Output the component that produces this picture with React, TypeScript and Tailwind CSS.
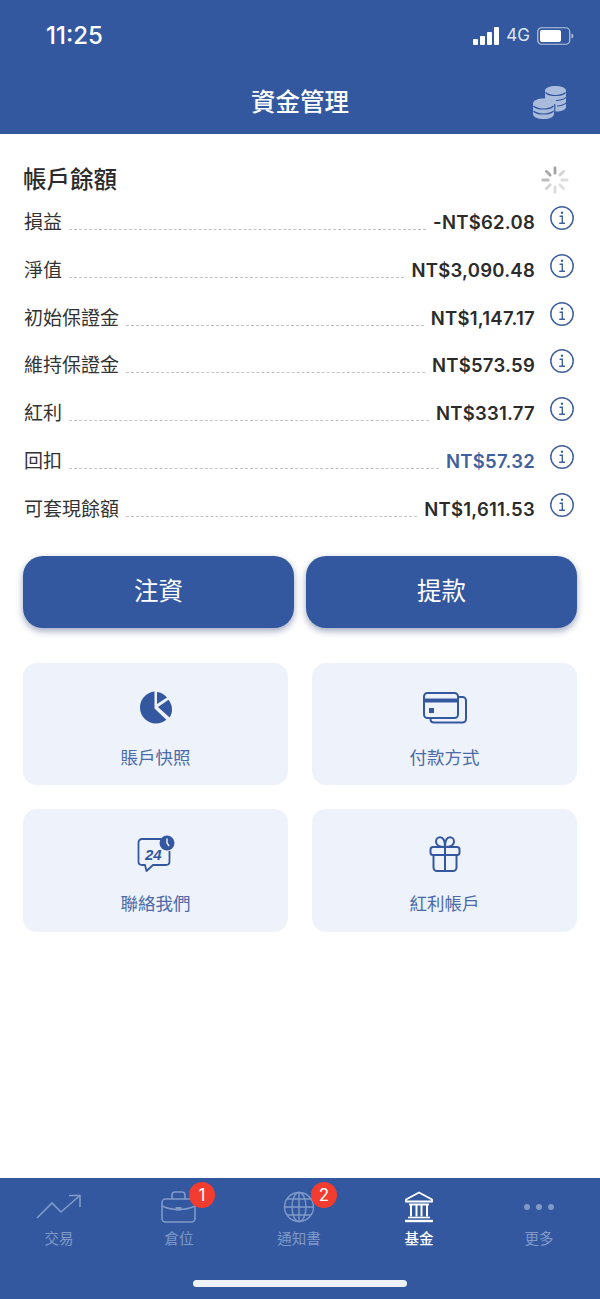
const rows = [
  { label: '損益', value: '-NT$62.08' },
  { label: '淨值', value: 'NT$3,090.48' },
  { label: '初始保證金', value: 'NT$1,147.17' },
  { label: '維持保證金', value: 'NT$573.59' },
  { label: '紅利', value: 'NT$331.77' },
  { label: '回扣', value: 'NT$57.32', blue: true },
  { label: '可套現餘額', value: 'NT$1,611.53' },
];

function InfoIcon() {
  return (
    <svg width="26" height="26" viewBox="0 0 26 26" fill="none" stroke="#3f619f" className="shrink-0">
      <circle cx="13" cy="13" r="11.2" strokeWidth="1.5" />
      <circle cx="13" cy="7.800" r="1.200" fill="#3f619f" stroke="none" />
      <path d="M10.600 11.200H13.300V18M10.200 18.300H16" strokeWidth="1.400" />
    </svg>
  );
}

function Spinner() {
  const bars = [0, 45, 90, 135, 180, 225, 270, 315];
  const shades = ['#a3a3a3', '#d4d4d4', '#dedede', '#e0e0e0', '#dcdcdc', '#d2d2d2', '#bcbcbc', '#a8a8a8'];
  return (
    <svg width="28" height="30" viewBox="0 0 28 30">
      {bars.map((deg, i) => (
        <rect key={deg} x="12.600" y="1.500" width="2.800" height="8" rx="1.200" fill={shades[i]} transform={`rotate(${deg} 14 15)`} />
      ))}
    </svg>
  );
}

function CoinsIcon() {
  return (
    <svg width="34" height="34" viewBox="0 0 34 34">
      {/* back stack */}
      <path d="M12 5.500C12 2.800 16.700 1 22.500 1S33 2.800 33 5.500V22c0 2.300-3.600 4-8 4.500H12Z" fill="#a9bcdc" />
      <path d="M12.500 7.500c2 2 5.800 3 10 3s8-1 10-3M23 15.500c4.200-.2 8-1.200 10-3.200M24 21c4-.3 7.300-1.300 9-3.200" stroke="#34589f" strokeWidth="1.200" fill="none" />
      {/* front stack */}
      <path d="M0 18.500C0 15.500 4.700 13.500 10.500 13.500S21 15.500 21 18.500v10.500C21 32 16.300 34 10.500 34S0 32 0 29Z" fill="#a9bcdc" />
      <path d="M21.800 19v10" stroke="#34589f" strokeWidth="1.200" />
      <path d="M0.500 21c2 2 5.800 3 10 3s8-1 10-3M.5 26c2 2 5.800 3 10 3s8-1 10-3" stroke="#34589f" strokeWidth="1.200" fill="none" />
    </svg>
  );
}

function PieIcon() {
  return (
    <svg width="34" height="36" viewBox="0 0 34 36" fill="#34589f">
      <path d="M15.500 1.500C7.300 2.300 1 9.200 1 17.500 1 26.300 8.200 33.500 17 33.500c4 0 7.600-1.400 10.400-3.800L15.500 18.500Z" />
      <path d="M18 2v12l10-6.500C25.500 4.500 22 2.400 18 2Z" />
      <path d="M19 17l10.500-7.200C31.700 12.700 33 16 33 19.500c0 3-.9 5.800-2.400 8.100Z" />
    </svg>
  );
}

function CardIcon() {
  return (
    <svg width="44" height="32" viewBox="0 0 44 32" fill="none" stroke="#34589f" strokeWidth="2">
      <rect x="1" y="1" width="34" height="25" rx="3.500" />
      <path d="M1 8.500H35" strokeWidth="4" />
      <path d="M36 5h3.500c1.900 0 3.500 1.500 3.500 3.400V27c0 2-1.600 3.500-3.500 3.500H11c-2 0-3.500-1.500-3.500-3.500" />
      <rect x="6" y="16" width="5" height="5" fill="#34589f" stroke="none" />
    </svg>
  );
}

function ChatIcon() {
  return (
    <svg width="38" height="38" viewBox="0 0 38 38" fill="none">
      <path d="M24 4H5C3 4 1.500 5.500 1.500 7.500v19C1.500 28.500 3 30 5 30h3l1.500 6 6.500-6h13c2 0 3.500-1.500 3.500-3.500V16" stroke="#34589f" strokeWidth="1.800" strokeLinejoin="round" />
      <text x="8" y="25" fontFamily="'Liberation Sans', sans-serif" fontSize="15" fontWeight="700" fontStyle="italic" fill="#34589f">24</text>
      <circle cx="30" cy="8" r="7.500" fill="#34589f" />
      <path d="M30 3.500V8l2 3" stroke="#eef2fa" strokeWidth="1.400" />
    </svg>
  );
}

function GiftIcon() {
  return (
    <svg width="32" height="36" viewBox="0 0 32 36" fill="none" stroke="#34589f" strokeWidth="2">
      <rect x="1.500" y="11" width="29" height="8" rx="2.500" />
      <path d="M4.500 19v12.500c0 1.900 1.600 3.500 3.500 3.500h16c1.900 0 3.500-1.600 3.500-3.500V19M16 11v24" />
      <path d="M16 11c-3.500 0-9-1-9-5.500C7 3 8.800 1.200 11 1.200 14.200 1.200 16 5 16 11ZM16 11c3.500 0 9-1 9-5.500C25 3 23.200 1.200 21 1.200 17.800 1.200 16 5 16 11Z" />
    </svg>
  );
}

function TrendIcon() {
  return (
    <svg width="46" height="26" viewBox="0 0 46 26" fill="none" stroke="#7f9ac9" strokeWidth="1.600">
      <path d="M1 24L16 9l9 9L44 1.500M33 1.500h11V13" />
    </svg>
  );
}

function BriefcaseIcon() {
  return (
    <svg width="36" height="32" viewBox="0 0 36 32" fill="none" stroke="#7f9ac9" strokeWidth="1.600">
      <rect x="1" y="8" width="33" height="23" rx="3.500" />
      <path d="M11 8V4c0-1.700 1.300-3 3-3h7c1.700 0 3 1.300 3 3v4M1 15c5 2.500 11 3.500 16.500 3.500S29 17.500 34 15" />
      <rect x="14.500" y="16" width="6" height="3.500" fill="#7f9ac9" stroke="none" />
    </svg>
  );
}

function GlobeIcon() {
  return (
    <svg width="32" height="32" viewBox="0 0 32 32" fill="none" stroke="#7f9ac9" strokeWidth="1.400">
      <circle cx="16" cy="16" r="14.500" />
      <ellipse cx="16" cy="16" rx="7" ry="14.500" />
      <path d="M16 1.500v29M1.500 16h29M4 8h24M4 24h24" />
    </svg>
  );
}

function BankIcon() {
  return (
    <svg width="30" height="32" viewBox="0 0 30 32" fill="none" stroke="#ffffff">
      <path d="M15 1.500L28 8.500v2H2v-2Z" strokeWidth="1.800" />
      <path d="M5 13.500h20" strokeWidth="2" />
      <path d="M7 13.500v12M12.500 13.500v12M17.500 13.500v12M23 13.500v12" strokeWidth="2" />
      <path d="M4 26.500h22" strokeWidth="1.600" />
      <path d="M1 30h28" strokeWidth="2.400" />
    </svg>
  );
}

function Badge({ n }: { n: number }) {
  return (
    <span className="absolute -top-[8px] left-[28px] flex h-[26px] w-[26px] items-center justify-center rounded-full bg-[#f23c30] text-[17px] leading-none text-white">
      {n}
    </span>
  );
}

export default function App() {
  return (
    <div
      className="flex h-[1299px] w-[600px] flex-col overflow-hidden bg-white"
      style={{ fontFamily: "Inter, 'Noto Sans CJK TC', sans-serif" }}
    >
      {/* Header */}
      <header className="h-[134px] shrink-0 bg-[#34589f] text-white">
        <div className="flex h-[72px] items-center justify-between pl-[46px] pr-[26px]">
          <span className="text-[24px] font-medium">11:25</span>
          <div className="flex items-center gap-[6px]">
            <svg width="27" height="18" viewBox="0 0 27 18" fill="#fff">
              <rect x="0" y="12" width="5" height="6" rx="1" />
              <rect x="7" y="9" width="5" height="9" rx="1" />
              <rect x="14" y="5" width="5" height="13" rx="1" />
              <rect x="21" y="0" width="5" height="18" rx="1" />
            </svg>
            <span className="text-[17px] text-[#dfe6f3]">4G</span>
            <svg width="37" height="18" viewBox="0 0 37 18" fill="none" className="ml-[1px]">
              <rect x="0.750" y="0.750" width="32" height="16.500" rx="4" stroke="#b9c7e0" strokeWidth="1.200" />
              <rect x="3" y="3" width="21" height="12" rx="2" fill="#fff" />
              <path d="M34.500 6.500c1.200.4 1.800 1.300 1.800 2.500s-.6 2.100-1.800 2.500Z" fill="#b9c7e0" />
            </svg>
          </div>
        </div>
        <div className="relative flex h-[62px] items-start justify-center pt-[13px]">
          <span className="text-[24.500px] leading-[34px] font-medium">資金管理</span>
          <div className="absolute top-[13px] right-[33px]">
            <CoinsIcon />
          </div>
        </div>
      </header>

      <main className="flex-1 px-[23px]">
        {/* Balance */}
        <div className="mt-[28px] flex h-[36px] items-center justify-between pr-[8px]">
          <h1 className="text-[23.500px] leading-[36px] font-medium text-[#2b2b2b]">帳戶餘額</h1>
          <Spinner />
        </div>
        <div className="mt-[6px] flex flex-col">
          {rows.map((r) => (
            <div key={r.label} className="flex h-[47.800px] items-start pl-[1px] pr-[2px]">
              <span className="pt-[5px] text-[19px] leading-[28px] text-[#333333]">{r.label}</span>
              <span className="mx-[7px] mt-[25px] flex-1 border-b border-dashed border-[#c4c4c4]" />
              <span
                className={`pt-[4px] text-[18.500px] leading-[28px] font-semibold tracking-[0.25px] ${
                  r.blue ? 'text-[#3f619f]' : 'text-[#2b2b2b]'
                }`}
              >
                {r.value}
              </span>
              <span className="ml-[14px] mt-[1px]">
                <InfoIcon />
              </span>
            </div>
          ))}
        </div>

        {/* Actions */}
        <div className="mt-[17.400px] flex gap-[12px]">
          {['注資', '提款'].map((t) => (
            <button
              key={t}
              className="h-[72px] flex-1 rounded-[20px] bg-[#34589f] pb-[2px] text-[24.500px] text-white shadow-[0_3px_7px_rgba(40,60,110,0.45)]"
            >
              {t}
            </button>
          ))}
        </div>

        {/* Shortcuts */}
        <div className="mt-[35px] grid grid-cols-2 gap-x-[24px] gap-y-[24px]">
          {[
            { label: '賬戶快照', icon: <PieIcon /> },
            { label: '付款方式', icon: <CardIcon /> },
            { label: '聯絡我們', icon: <ChatIcon /> },
            { label: '紅利帳戶', icon: <GiftIcon /> },
          ].map((c) => (
            <div key={c.label} className="flex h-[122.500px] flex-col items-center rounded-[14px] bg-[#eef2fa]">
              <div className="mt-[26px] flex h-[38px] items-center justify-center">{c.icon}</div>
              <span className="mt-[17px] text-[17.500px] leading-[28px] text-[#4a6aa8]">{c.label}</span>
            </div>
          ))}
        </div>
      </main>

      {/* Tab bar */}
      <footer className="relative h-[121px] shrink-0 bg-[#34589f]">
        <div className="-ml-[1px] flex pt-[12px]">
          {[
            { label: '交易', icon: <TrendIcon /> },
            { label: '倉位', icon: <BriefcaseIcon />, badge: 1 },
            { label: '通知書', icon: <GlobeIcon />, badge: 2 },
            { label: '基金', icon: <BankIcon />, active: true },
            {
              label: '更多',
              icon: (
                <div className="flex gap-[6px]">
                  <span className="h-[6px] w-[6px] rounded-full bg-[#7f9ac9]" />
                  <span className="h-[6px] w-[6px] rounded-full bg-[#7f9ac9]" />
                  <span className="h-[6px] w-[6px] rounded-full bg-[#7f9ac9]" />
                </div>
              ),
            },
          ].map((t) => (
            <div key={t.label} className="flex w-[120px] flex-col items-center">
              <div className="relative flex h-[34px] items-center justify-center">
                {t.icon}
                {t.badge ? <Badge n={t.badge} /> : null}
              </div>
              <span className={`mt-[3px] text-[14.500px] leading-[24px] ${t.active ? 'font-medium text-white' : 'text-[#7f9ac9]'}`}>
                {t.label}
              </span>
            </div>
          ))}
        </div>
        <div className="absolute bottom-[12px] left-[193px] h-[7px] w-[214px] rounded-full bg-[#eef1f5]" />
      </footer>
    </div>
  );
}
